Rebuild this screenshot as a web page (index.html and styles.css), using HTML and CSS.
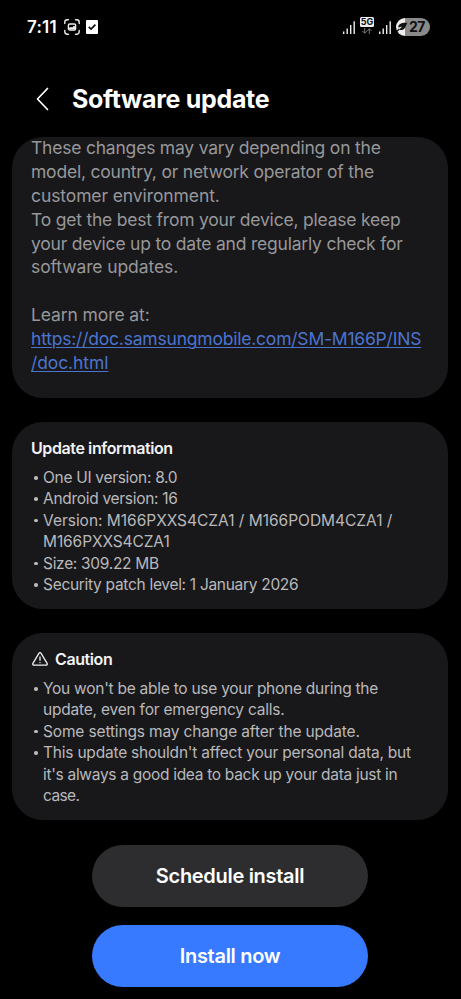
FILE: index.html
```
<!DOCTYPE html>
<html lang="en">
<head>
<meta charset="utf-8">
<title>Software update</title>
<link rel="stylesheet" href="styles.css">
</head>
<body>
<div class="status">
  <div class="status-left">
    <span class="time">7:11</span>
    <svg class="capture" viewBox="0 0 16 16" width="16" height="16" fill="none" stroke="#eee" stroke-width="1.4" stroke-linecap="round"><path d="M.8 4.6V3.2A2.4 2.4 0 0 1 3.2.8h1.2M11.6.8h1.2a2.4 2.4 0 0 1 2.4 2.4v1.4M15.2 11.4v1.4a2.4 2.4 0 0 1-2.4 2.4h-1.2M4.4 15.2H3.2a2.4 2.4 0 0 1-2.4-2.4v-1.4"/><rect x="4.4" y="5" width="7.200" height="6" rx="1.300"/><path d="M5 10.200V8.800l2-.8 1.200.6 1.700-1.800 1.300 1v2.400z" fill="#eee" stroke="none"/></svg>
    <svg class="check" viewBox="0 0 12 14" width="12" height="14"><rect width="12" height="14" rx="1" fill="#fff"/><path d="M2.700 6.800l2.400 2.300 4.300-4.500" fill="none" stroke="#111" stroke-width="1.700"/></svg>
  </div>
  <div class="status-right">
    <svg viewBox="0 0 12 13" width="12" height="13" fill="#eee"><path d="M0 10.500h1.400V13H0zM3.500 7.600h1.400V13H3.500zM7 4h1.400v9H7zM10.500.3h1.400V13h-1.400z"/></svg>
    <div class="network">
      <span class="fiveg">5G</span>
      <svg viewBox="0 0 10 6" width="10" height="6" fill="none" stroke="#777" stroke-width="1"><path d="M2.700 0v5M.5 3l2.200 2.300L4.900 3M7.300 6V1M5.200 3l2.100-2.300L9.500 3"/></svg>
    </div>
    <svg viewBox="0 0 12 13" width="12" height="13" fill="#eee"><path d="M0 10.500h1.400V13H0zM3.500 7.600h1.400V13H3.500zM7 4h1.400v9H7zM10.500.3h1.400V13h-1.400z"/></svg>
    <div class="battery">
      <svg viewBox="0 0 12 10" width="12" height="10"><path d="M1 9.300L3.400 7" stroke="#111" stroke-width="1.300" fill="none"/><path d="M11.400.8C7 .2 3 1.200 2.400 4.400L2.300 5.600 6.300 4.400 3.400 7.200C4 8 5 8.300 6.200 8 9.200 7.400 9.600 4 11.400.8z" fill="#111"/></svg>
      <span>27</span>
    </div>
  </div>
</div>
<header class="bar">
  <svg viewBox="0 0 14 24" width="14" height="24" fill="none" stroke="#fff" stroke-width="1.700" stroke-linecap="round" stroke-linejoin="round"><path d="M12.500 1.500L2.500 12 12.500 22.500"/></svg>
  <h1>Software update</h1>
</header>
<main>
  <section class="card notes">
    <p><span class="snug">These changes may vary depending on the<br>model, country, or network operator of the</span><br>customer environment.<br><span class="snug">To get the best from your device, please keep<br>your device up to date and regularly check for</span><br>software updates.</p>
    <p>Learn more at:<br><a><span class="snug">https://doc.samsungmobile.com/SM-M166P/INS</span><br>/doc.html</a></p>
  </section>
  <section class="card info">
    <h2>Update information</h2>
    <ul>
      <li class="tight">One UI version: 8.0</li>
      <li class="tight">Android version: 16</li>
      <li><span class="wide">Version: M166PXXS4CZA1 / M166PODM4CZA1 /</span><br>M166PXXS4CZA1</li>
      <li class="tight">Size: 309.22 MB</li>
      <li class="tight">Security patch level: 1 January 2026</li>
    </ul>
  </section>
  <section class="card info">
    <h2 class="caution"><svg viewBox="0 0 16 14" width="16" height="14" fill="none" stroke="#eee" stroke-width="1.300" stroke-linejoin="round" stroke-linecap="round"><path d="M6.900 1.300L.9 11.400A1.200 1.200 0 0 0 1.900 13.200H14.100A1.200 1.200 0 0 0 15.100 11.400L9.100 1.300A1.300 1.300 0 0 0 6.900 1.300zM8 4.800V8.300M8 10.600V10.700"/></svg>Caution</h2>
    <ul>
      <li class="snug"><span class="close">You won't be able to use your phone during the</span><br>update, even for emergency calls.</li>
      <li class="regular">Some settings may change after the update.</li>
      <li class="snug">This update shouldn't affect your personal data, but<br><span class="tight">it's always a good idea to back up your data just in</span><br><span class="closest">case.</span></li>
    </ul>
  </section>
</main>
<div class="actions">
  <button class="schedule">Schedule install</button>
  <button class="install">Install now</button>
</div>
</body>
</html>
```
FILE: styles.css
```
* { box-sizing: border-box; margin: 0; padding: 0; }
body { background: #000; color: #fff; font-family: Inter, Roboto, sans-serif; width: 461px; height: 999px; overflow: hidden; }
.status { height: 54px; padding: 0 31px 0 27px; display: flex; justify-content: space-between; align-items: center; }
.status-left, .status-right { display: flex; align-items: center; }
.time { font-size: 17px; font-weight: 600; letter-spacing: 0.2px; line-height: 20px; width: 31px; }
.capture { margin-left: 6px; }
.check { margin-left: 6px; }
.network { width: 14px; margin: -3px 5px 0; display: flex; flex-direction: column; align-items: center; gap: 1px; }
.fiveg { width: 14px; height: 10px; border-radius: 1.5px; background: #eee; color: #111; font-size: 9px; font-weight: 700; line-height: 10px; text-align: center; }
.battery { width: 34px; height: 18px; margin-left: 5px; border-radius: 9px; background: linear-gradient(90deg, #eee 9px, #8a8a8a 9px); display: flex; align-items: center; color: #111; font-size: 14px; font-weight: 700; letter-spacing: -0.6px; }
.battery span { line-height: 18px; margin-left: 1px; }
.bar { height: 83px; padding: 4px 0 0 35px; display: flex; align-items: flex-start; }
.bar svg { margin-top: 29px; }
h1 { margin: 27px 0 0 23px; font-size: 25px; line-height: 28px; font-weight: 700; letter-spacing: -0.3px; white-space: nowrap; }
main { display: flex; flex-direction: column; gap: 24px; padding: 0 13px 0 12px; }
.card { border-radius: 31px; background: #18181a; overflow: hidden; white-space: nowrap; }
.notes { height: 261px; padding: 0 19px; color: #97979a; font-size: 17.5px; line-height: 23.95px; letter-spacing: -0.1px; }
.notes p { margin-top: -1.3px; }
.notes p + p { margin-top: 23.9px; }
.notes a { color: #4c74cf; text-decoration: underline; text-decoration-thickness: 1px; text-underline-offset: 2px; }
.info { height: 187px; padding: 15px 19px 0; }
h2 { font-size: 16px; line-height: 22px; font-weight: 600; color: #f2f2f4; display: flex; align-items: center; letter-spacing: -0.4px; }
.caution svg { margin: 0 7px 0 1px; }
ul { list-style: none; margin-top: 8px; }
li { position: relative; padding-left: 12px; font-size: 15.5px; line-height: 21.45px; color: #b9b9bc; letter-spacing: -0.1px; }
li::before { content: ""; position: absolute; left: 3px; top: 9px; width: 3.5px; height: 3.5px; border-radius: 50%; background: #b9b9bc; }
.wide { letter-spacing: -0.02px; }
.regular { letter-spacing: -0.15px; }
.snug { letter-spacing: -0.21px; }
.close { letter-spacing: -0.26px; }
.tight { letter-spacing: -0.3px; }
.closest { letter-spacing: -0.6px; }
.actions { display: flex; flex-direction: column; align-items: center; gap: 18px; margin-top: 24.5px; padding-right: 1px; }
button { border: 0; width: 276px; height: 62px; border-radius: 31px; color: #fff; font: 600 20px/62px Inter, sans-serif; letter-spacing: -0.3px; }
.schedule { background: #2d2d2f; }
.install { background: #387aff; }
```
